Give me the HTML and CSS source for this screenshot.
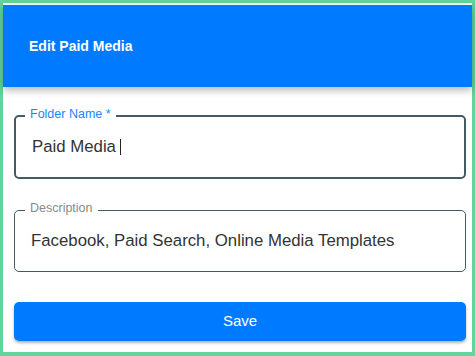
FILE: index.html
```html
<!DOCTYPE html>
<html>
<head>
  <meta name="viewport" content="width=device-width, initial-scale=1.0">
  <title>Edit Paid Media</title>
  <link rel="stylesheet" href="styles.css">
</head>
<body>
  <div class="frame">
    <div class="header">
      <h1>Edit Paid Media</h1>
    </div>
    <div class="form">
      <div class="field focused">
        <span class="label">Folder Name *</span>
        <div class="value">Paid Media<span class="caret"></span></div>
      </div>
      <div class="field">
        <span class="label">Description</span>
        <div class="value">Facebook, Paid Search, Online Media Templates</div>
      </div>
      <button class="save">Save</button>
    </div>
  </div>
</body>
</html>
```

FILE: styles.css
```css
html, body {
  margin: 0;
  padding: 0;
  height: 100%;
  font-family: "Liberation Sans", Arial, sans-serif;
  background: #ffffff;
}

.frame {
  height: 356px;
  box-sizing: border-box;
  border: 3px solid #63d49b;
  border-bottom-width: 4px;
  background: #ffffff;
}

.header {
  margin-top: 2px;
  height: 82px;
  background: #007bff;
  box-shadow: 0 3px 8px rgba(0, 0, 0, 0.3);
  display: flex;
  align-items: center;
  padding-left: 26px;
}

h1 {
  margin: 0;
  font-size: 14px;
  font-weight: bold;
  color: #ffffff;
}

.form {
  padding: 0 6px 0 11px;
  display: flex;
  flex-direction: column;
}

.field {
  position: relative;
  height: 62px;
  box-sizing: border-box;
  border: 1px solid #455a64;
  border-radius: 5px;
  margin-top: 31px;
  display: flex;
  align-items: center;
  padding-left: 16px;
}

.field.focused {
  height: 64px;
  border-width: 2px;
  margin-top: 28px;
  padding-left: 16px;
}

.label {
  position: absolute;
  top: -11px;
  left: 10px;
  padding: 0 5px;
  background: #ffffff;
  font-size: 12.5px;
  line-height: 16px;
  color: #8a8a8a;
}

.field.focused .label {
  top: -11px;
  left: 9px;
  color: #1a86ff;
}

.value {
  font-size: 16.8px;
  color: #333333;
  display: flex;
  align-items: center;
}

.caret {
  display: inline-block;
  width: 1px;
  height: 16px;
  background: #222222;
  margin-left: 4px;
}

.save {
  margin-top: 30px;
  height: 39px;
  border: none;
  border-radius: 5px;
  background: #007bff;
  color: #ffffff;
  font-family: "Liberation Sans", Arial, sans-serif;
  font-size: 15px;
  line-height: 15px;
  padding: 0 0 2px;
  box-shadow: 0 2px 3px rgba(0, 0, 0, 0.3);
  cursor: pointer;
}
```
